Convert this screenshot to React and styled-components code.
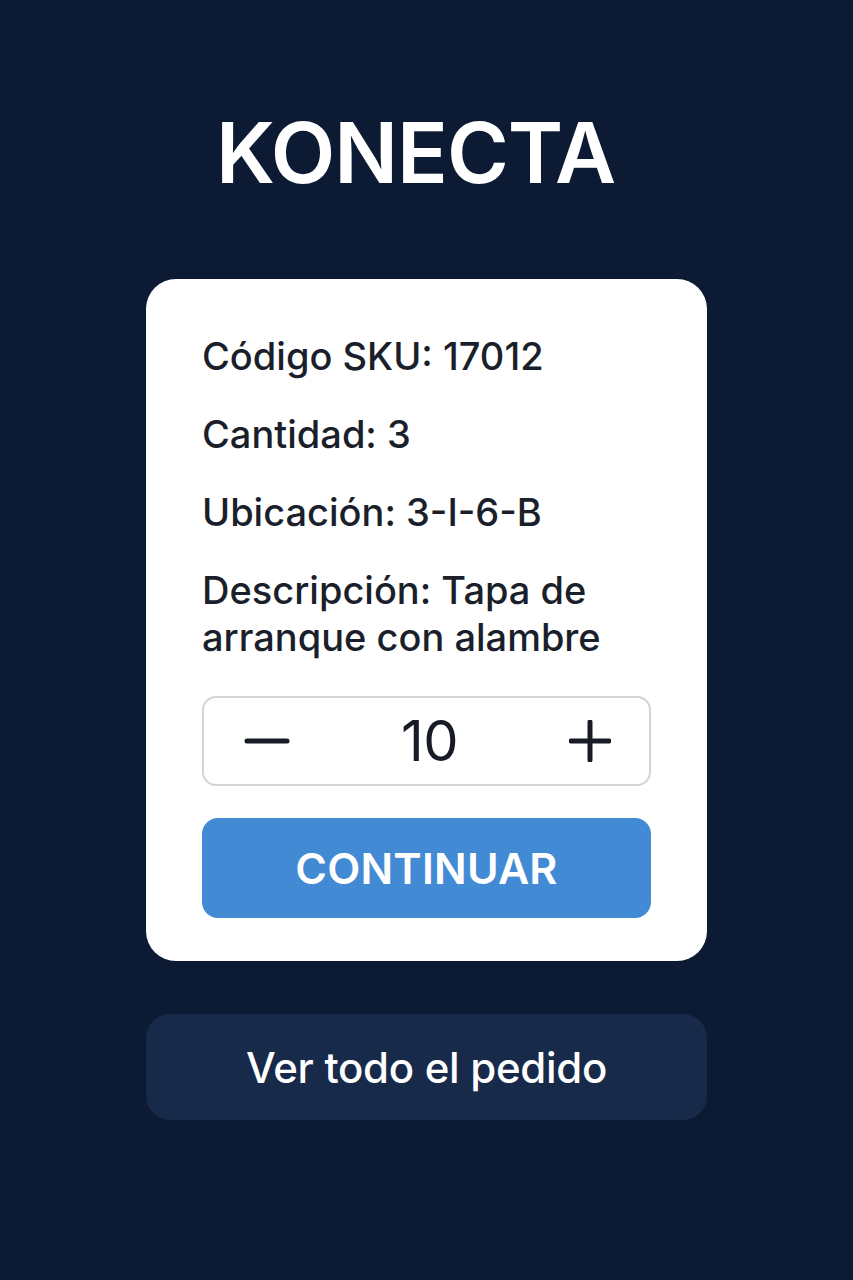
import styled, { createGlobalStyle } from 'styled-components';

const GlobalStyle = createGlobalStyle`
  html, body {
    margin: 0;
    padding: 0;
    background: #0c1a33;
  }
  body {
    font-family: 'Inter', 'Noto Sans', sans-serif;
  }
`;

const Page = styled.div`
  width: 853px;
  min-height: 1280px;
  display: flex;
  flex-direction: column;
  align-items: center;
  box-sizing: border-box;
  padding-top: 106px;
`;

const Logo = styled.h1`
  margin: 0 22px 0 0;
  color: #fff;
  font-size: 84px;
  font-weight: 600;
  line-height: 94px;
  letter-spacing: -1px;
`;

const Card = styled.div`
  margin-top: 79px;
  width: 561px;
  box-sizing: border-box;
  background: #fff;
  border-radius: 30px;
  padding: 54px 56px 43px;
  display: flex;
  flex-direction: column;
`;

const Field = styled.p`
  margin: 0 0 ${(p) => p.gap}px;
  color: #1a1f2b;
  font-size: 38px;
  font-weight: 500;
  line-height: 47px;
  letter-spacing: 0;
`;

const Stepper = styled.div`
  height: 90px;
  box-sizing: border-box;
  border: 2px solid #d2d4d8;
  border-radius: 14px;
  display: flex;
  align-items: center;
  justify-content: space-between;
  padding: 0 38px 0 40px;
  margin-top: 35px;
`;

const StepButton = styled.button`
  background: none;
  border: none;
  padding: 0;
  display: flex;
  align-items: center;
  cursor: pointer;
  color: #161b26;
`;

const Value = styled.span`
  font-size: 56px;
  font-weight: 400;
  color: #161b26;
  letter-spacing: -0.5px;
`;

const Primary = styled.button`
  margin-top: 32px;
  height: 100px;
  border: none;
  border-radius: 16px;
  background: #428bd4;
  color: #fff;
  font-family: inherit;
  font-size: 43px;
  font-weight: 600;
  letter-spacing: 0.2px;
  cursor: pointer;
`;

const Secondary = styled.button`
  margin-top: 53px;
  width: 561px;
  height: 106px;
  border: none;
  border-radius: 24px;
  background: #172a4a;
  color: #fff;
  font-family: inherit;
  font-size: 42px;
  font-weight: 500;
  letter-spacing: -0.3px;
  cursor: pointer;
`;

const Minus = () => (
  <svg width="46" height="8" viewBox="0 0 46 8">
    <line x1="3" y1="4" x2="43" y2="4" stroke="currentColor" strokeWidth="5" strokeLinecap="round" />
  </svg>
);

const Plus = () => (
  <svg width="42" height="42" viewBox="0 0 42 42">
    <line x1="2" y1="21" x2="40" y2="21" stroke="currentColor" strokeWidth="5" strokeLinecap="round" />
    <line x1="21" y1="2" x2="21" y2="40" stroke="currentColor" strokeWidth="5" strokeLinecap="round" />
  </svg>
);

export default function App() {
  return (
    <Page>
      <GlobalStyle />
      <Logo>KONECTA</Logo>
      <Card>
        <Field gap={31}>Código SKU: 17012</Field>
        <Field gap={31}>Cantidad: 3</Field>
        <Field gap={31}>Ubicación: 3-I-6-B</Field>
        <Field gap={0}>Descripción: Tapa de arranque con alambre</Field>
        <Stepper>
          <StepButton aria-label="menos"><Minus /></StepButton>
          <Value>10</Value>
          <StepButton aria-label="más"><Plus /></StepButton>
        </Stepper>
        <Primary>CONTINUAR</Primary>
      </Card>
      <Secondary>Ver todo el pedido</Secondary>
    </Page>
  );
}
